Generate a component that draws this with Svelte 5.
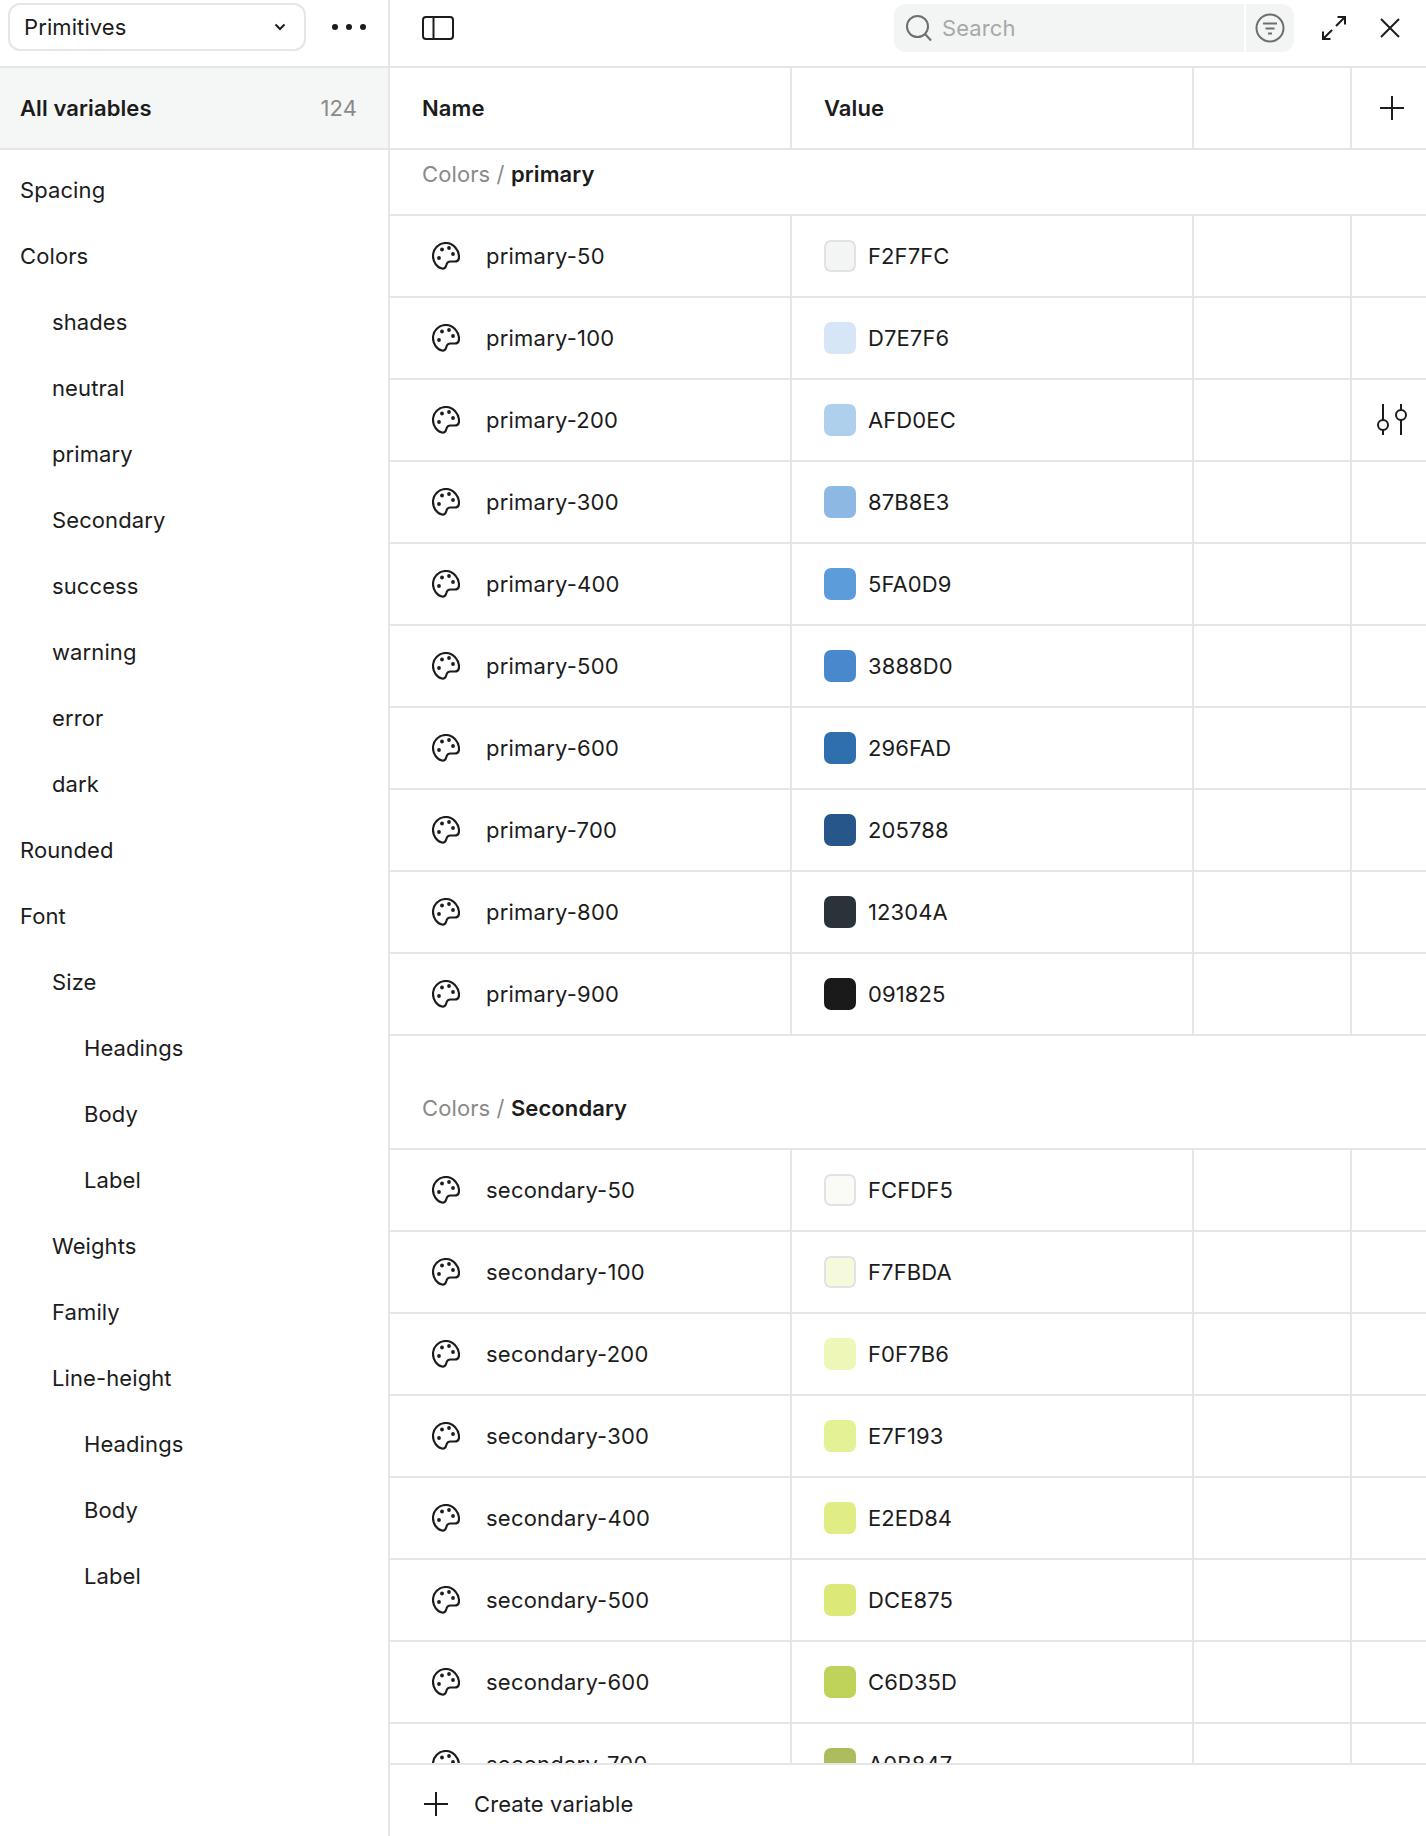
<script>
  const nav = [
    ['Spacing', 0], ['Colors', 0], ['shades', 1], ['neutral', 1], ['primary', 1], ['Secondary', 1],
    ['success', 1], ['warning', 1], ['error', 1], ['dark', 1], ['Rounded', 0], ['Font', 0], ['Size', 1],
    ['Headings', 2], ['Body', 2], ['Label', 2], ['Weights', 1], ['Family', 1], ['Line-height', 1],
    ['Headings', 2], ['Body', 2], ['Label', 2]
  ];

  const primary = [
    ['50', 'F2F7FC', '#f3f5f5', true], ['100', 'D7E7F6', '#d7e6f6'], ['200', 'AFD0EC', '#afd0ec'],
    ['300', '87B8E3', '#8cb8e3'], ['400', '5FA0D9', '#5c9dd9'], ['500', '3888D0', '#4a88cd'],
    ['600', '296FAD', '#2f6fad'], ['700', '205788', '#26568a'], ['800', '12304A', '#2b3238'],
    ['900', '091825', '#1a1a1a']
  ];

  const secondary = [
    ['50', 'FCFDF5', '#fafaf7', true], ['100', 'F7FBDA', '#f6fadc', true], ['200', 'F0F7B6', '#eff7b8'],
    ['300', 'E7F193', '#e5f195'], ['400', 'E2ED84', '#e0ed84'], ['500', 'DCE875', '#dce877'],
    ['600', 'C6D35D', '#bfd35b'], ['700', 'A0B847', '#adbc5c']
  ];

  const sections = [
    { title: 'primary', prefix: 'primary', rows: primary },
    { title: 'Secondary', prefix: 'secondary', rows: secondary }
  ];
</script>

<div class="app">
  <aside class="side">
    <div class="side-top">
      <div class="select">
        <span>Primitives</span>
        <svg width="12" height="8" viewBox="0 0 12 8"><path d="M1.500 1.500 6 6l4.500-4.500" /></svg>
      </div>
      <div class="dots"><i></i><i></i><i></i></div>
    </div>
    <div class="all"><b>All variables</b><span>124</span></div>
    <nav>
      {#each nav as [label, level]}
        <div class="nav-item lvl{level}">{label}</div>
      {/each}
    </nav>
  </aside>

  <main class="main">
    <div class="topbar">
      <svg class="panel" width="32" height="26" viewBox="0 0 32 26">
        <rect x="1" y="2" width="30" height="22" rx="3" />
        <path d="M11.500 2v22" />
      </svg>
      <div class="search">
        <div class="search-input">
          <svg width="28" height="28" viewBox="0 0 28 28">
            <circle cx="12.500" cy="12.500" r="10.500" />
            <path d="m20 20 6 6.500" />
          </svg>
          <span>Search</span>
        </div>
        <div class="search-filter">
          <svg width="30" height="30" viewBox="0 0 30 30">
            <circle cx="15" cy="15" r="13.500" />
            <path d="M8 10.500h14M10.500 15.500h9M13 20.500h4" />
          </svg>
        </div>
      </div>
      <svg class="tool expand" width="26" height="26" viewBox="0 0 26 26">
        <path d="M15 11 24 2M16.500 2H24v7.500M11 15l-9 9M2 16.500V24h7.500" />
      </svg>
      <svg class="tool close" width="22" height="22" viewBox="0 0 22 22"><path d="m2 2 18 18M20 2 2 20" /></svg>
    </div>

    <div class="head">
      <div class="c1">Name</div>
      <div class="c2">Value</div>
      <div class="c3"></div>
      <div class="c4">
        <svg class="plus" width="24" height="24" viewBox="0 0 24 24"><path d="M12 0v24M0 12h24" /></svg>
      </div>
    </div>

    <div class="table">
      {#each sections as s, si}
        <div class="sec" class:first={si === 0}>Colors / <b>{s.title}</b></div>
        {#each s.rows as [n, val, col, light], ri}
          <div class="row">
            <div class="c1">
              <svg class="pal" width="28" height="28" viewBox="0 0 28 28">
                <path d="M14 1C6.800 1 1 6.800 1 14c0 6 4 11.500 9 12.500 2 .5 3.500-.5 4-2.500l.5-1.500c.5-2 2-3 4-3h4c3 0 4.500-2 4.500-4.500C27 7.500 21 1 14 1Z" />
                <circle class="dot" cx="7" cy="16" r="1.900" />
                <circle class="dot" cx="10" cy="7.500" r="1.900" />
                <circle class="dot" cx="17" cy="6" r="1.900" />
                <circle class="dot" cx="21" cy="12" r="1.900" />
              </svg>
              <span class="name">{s.prefix}-{n}</span>
            </div>
            <div class="c2"><span class="swatch" class:light style="background:{col}"></span><span>{val}</span></div>
            <div class="c3"></div>
            <div class="c4">
              {#if si === 0 && ri === 2}
                <svg class="sliders" width="32" height="32" viewBox="0 0 32 32">
                  <path d="M7 0v16M7 26v5M25 0v6M25 16v15" />
                  <circle cx="7" cy="21" r="5" />
                  <circle cx="25" cy="11" r="5" />
                </svg>
              {/if}
            </div>
          </div>
        {/each}
      {/each}
    </div>

    <div class="foot">
      <svg class="plus" width="24" height="24" viewBox="0 0 24 24"><path d="M12 0v24M0 12h24" /></svg>
      <span>Create variable</span>
    </div>
  </main>
</div>

<style>
  :global(body) {
    margin: 0;
    background: #fff;
  }

  .app {
    display: flex;
    width: 1426px;
    height: 1836px;
    overflow: hidden;
    font-family: Inter, "Noto Sans", sans-serif;
    font-size: 22px;
    letter-spacing: 0.1px;
    color: #1c1c1c;
  }

  svg {
    fill: none;
    stroke: #1c1c1c;
    stroke-width: 2;
    flex: none;
    display: block;
  }

  .side {
    width: 388px;
    flex: none;
    border-right: 2px solid #e6e6e6;
  }

  .side-top {
    height: 66px;
    box-sizing: border-box;
    padding: 3px 0 0 8px;
    display: flex;
    gap: 26px;
  }

  .select {
    width: 298px;
    height: 48px;
    box-sizing: border-box;
    border: 2px solid #e6e6e6;
    border-radius: 12px;
    padding: 0 18px 0 14px;
    display: flex;
    align-items: center;
    justify-content: space-between;
  }

  .dots {
    display: flex;
    gap: 8px;
    margin-top: 21px;
  }

  .dots i {
    width: 6px;
    height: 6px;
    border-radius: 50%;
    background: #1c1c1c;
  }

  .all {
    box-sizing: border-box;
    border-top: 2px solid #e6e6e6;
    border-bottom: 2px solid #e6e6e6;
    height: 84px;
    background: #f5f6f6;
    padding: 0 31px 0 20px;
    display: flex;
    align-items: center;
    justify-content: space-between;
  }

  .all b {
    font-weight: 600;
  }

  .all span {
    color: #8a8a8a;
  }

  nav {
    padding-top: 7px;
  }

  .nav-item {
    height: 66px;
    line-height: 66px;
  }

  .lvl0 {
    padding-left: 20px;
  }

  .lvl1 {
    padding-left: 52px;
  }

  .lvl2 {
    padding-left: 84px;
  }

  .main {
    flex: 1;
    min-width: 0;
    display: flex;
    flex-direction: column;
  }

  .topbar {
    height: 66px;
    flex: none;
    display: flex;
    align-items: flex-start;
    padding-left: 32px;
  }

  .panel {
    margin-top: 15px;
  }

  .search {
    margin: 4px 0 0 440px;
    display: flex;
    gap: 2px;
    height: 48px;
  }

  .search svg {
    stroke: #6e6e6e;
  }

  .search-input {
    width: 350px;
    background: #f3f5f5;
    border-radius: 12px 0 0 12px;
    display: flex;
    align-items: center;
    gap: 9px;
    padding-left: 11px;
    box-sizing: border-box;
    color: #a8a8a8;
  }

  .search-filter {
    width: 48px;
    background: #f3f5f5;
    border-radius: 0 12px 12px 0;
    display: flex;
    align-items: center;
    justify-content: center;
  }

  .tool {
    margin: 17px 0 0 32px;
  }

  .expand {
    margin: 15px 0 0 27px;
  }

  .head,
  .row {
    display: flex;
    flex: none;
    border-bottom: 2px solid #e6e6e6;
    box-sizing: border-box;
  }

  .head {
    height: 84px;
    border-top: 2px solid #e6e6e6;
    font-weight: 600;
  }

  .row {
    height: 82px;
  }

  .c1,
  .c2,
  .c3,
  .c4 {
    display: flex;
    align-items: center;
    box-sizing: border-box;
  }

  .c1 {
    width: 402px;
    padding-left: 32px;
    border-right: 2px solid #e6e6e6;
  }

  .c2 {
    width: 402px;
    padding-left: 32px;
    border-right: 2px solid #e6e6e6;
  }

  .c3 {
    width: 158px;
    border-right: 2px solid #e6e6e6;
  }

  .c4 {
    flex: 1;
    justify-content: center;
    padding-left: 5px;
  }

  .table {
    flex: 1;
    min-height: 0;
    overflow: hidden;
  }

  .sec {
    height: 114px;
    box-sizing: border-box;
    border-bottom: 2px solid #e6e6e6;
    padding-top: 59px;
    color: #8a8a8a;
    padding-left: 32px;
    line-height: 27px;
  }

  .sec.first {
    height: 66px;
    padding-top: 11px;
  }

  .sec b {
    color: #1c1c1c;
    font-weight: 600;
  }

  .pal {
    margin-left: 10px;
    margin-right: 26px;
    stroke-width: 2.2;
  }

  .name {
    letter-spacing: 0.22px;
  }

  .dot {
    fill: #1c1c1c;
    stroke: none;
  }

  .swatch {
    width: 32px;
    height: 32px;
    box-sizing: border-box;
    border-radius: 7px;
    margin-right: 12px;
  }

  .swatch.light {
    border: 2px solid #e2e2e2;
  }

  .foot {
    height: 73px;
    flex: none;
    box-sizing: border-box;
    border-top: 2px solid #e6e6e6;
    display: flex;
    align-items: center;
    gap: 26px;
    padding: 6px 0 0 34px;
  }
</style>
